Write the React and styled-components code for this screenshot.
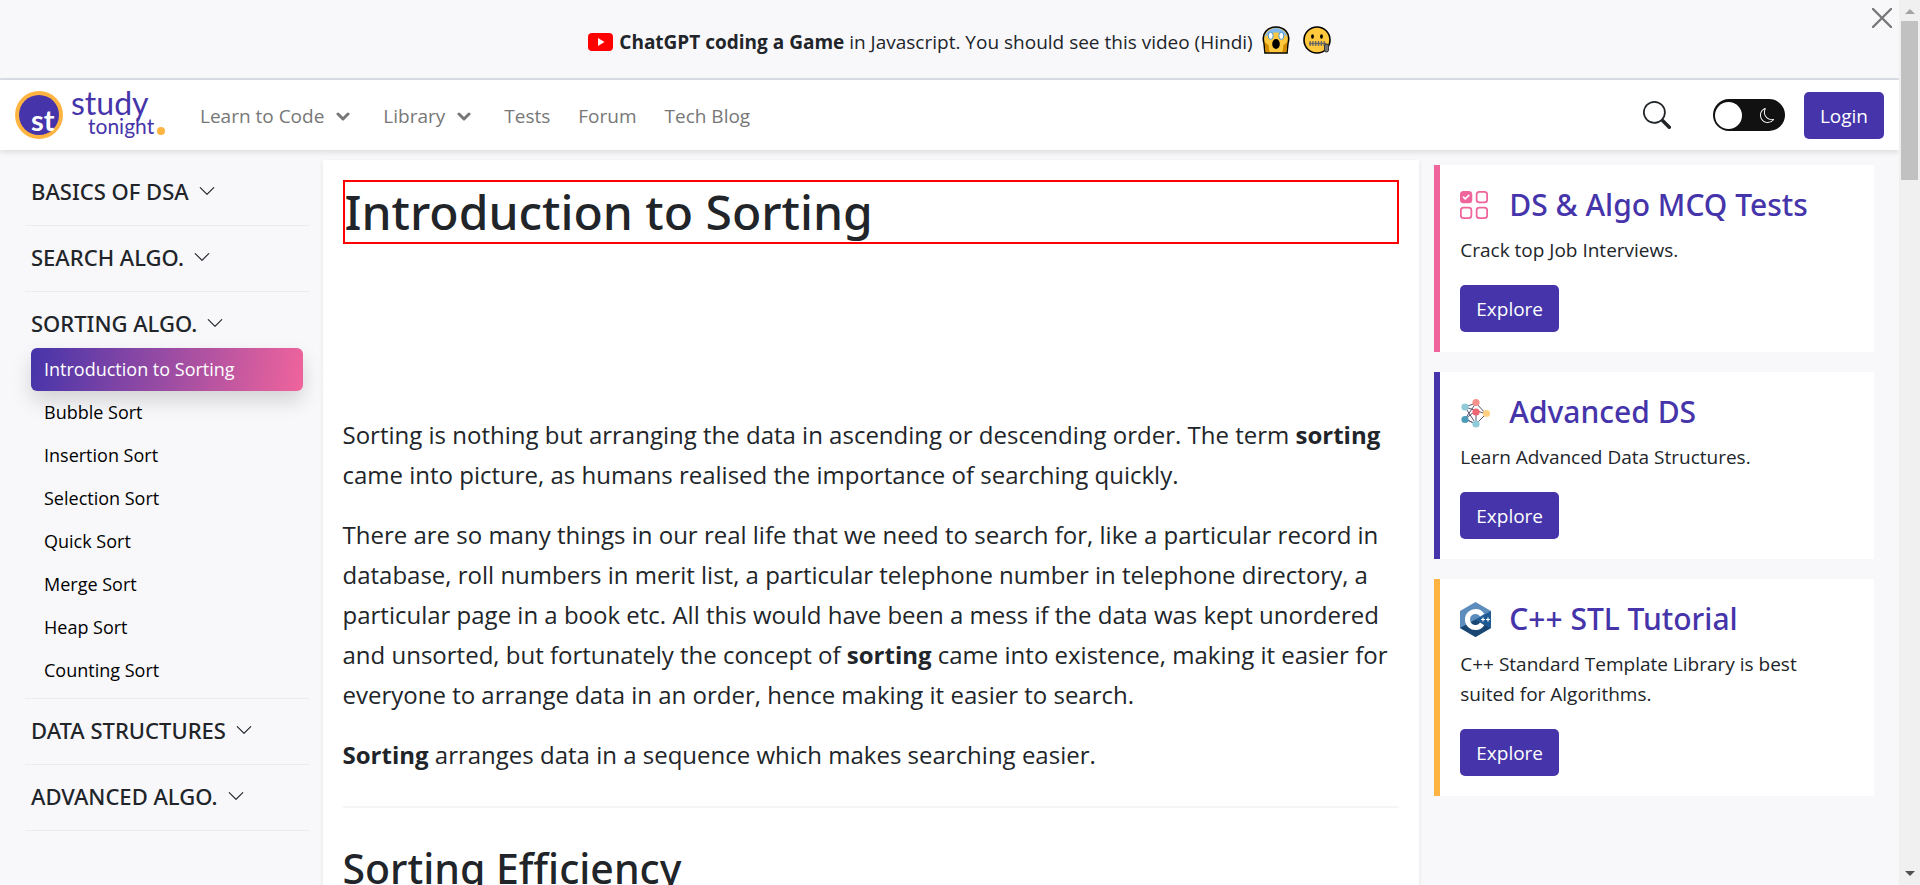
import React from "react";
import styled, { createGlobalStyle } from "styled-components";
import { BsChevronDown, BsMoon, BsSearch, BsUiChecksGrid } from "react-icons/bs";

const GlobalStyle = createGlobalStyle`
  *, *::before, *::after { box-sizing: border-box; }
  body {
    margin: 0;
    background: #f8f8fb;
    color: #212529;
    font-family: "Open Sans", "Noto Sans", sans-serif;
    font-size: 19px;
    line-height: 30px;
  }
  h1, h2, h3, p, ul { margin: 0; padding: 0; }
  h1, h2, h3 { font-family: "Noto Sans", "Open Sans", sans-serif; }
  button, input { font: inherit; color: inherit; }
  svg { display: block; flex: none; }
`;

const Frame = styled.div`
  display: flex;
  height: 100vh;
`;

const Page = styled.div`
  flex: 1;
  min-width: 0;
  overflow-y: auto;
  scrollbar-width: none;
`;

const ScrollTrack = styled.div`
  display: flex;
  flex-direction: column;
  align-items: center;
  width: 21px;
  padding: 9px 0;
  background: #f0f0f0;
`;

const ScrollArrow = styled.span`
  border: 5px solid transparent;
  border-top-width: ${(p) => (p.$up ? "0" : "5px")};
  border-bottom-width: ${(p) => (p.$up ? "5px" : "0")};
  border-top-color: ${(p) => (p.$up ? "transparent" : "#505050")};
  border-bottom-color: ${(p) => (p.$up ? "#a3a3a3" : "transparent")};
`;

const ScrollThumb = styled.span`
  width: 17px;
  height: 18vh;
  margin: 7px 0 auto;
  background: #c1c1c1;
`;

const Banner = styled.div`
  position: relative;
  display: flex;
  align-items: center;
  justify-content: center;
  height: 80px;
  padding: 6px 0 0 20px;
  border-bottom: 2px solid #dce0e6;
`;

const BannerLink = styled.a`
  display: flex;
  align-items: center;
  gap: 6px;
  color: inherit;
  text-decoration: none;
`;

const Emojis = styled.span`
  display: flex;
  gap: 13px;
  margin-left: 3px;
  padding-bottom: 4px;
`;

const CloseButton = styled.button`
  position: absolute;
  top: 8px;
  right: 7px;
  padding: 0;
  border: 0;
  background: none;
`;

const Header = styled.header`
  position: relative;
  display: flex;
  align-items: center;
  height: 70px;
  padding: 0 15px;
  background: #fff;
  box-shadow: 0 2px 6px rgba(0, 0, 0, 0.12);
`;

const Nav = styled.nav`
  display: flex;
  align-items: center;
  gap: 28px;
  flex: 1;
  margin-left: 34px;
  padding-top: 2px;
`;

const NavLink = styled.a`
  display: flex;
  align-items: center;
  gap: 12px;
  color: #777;
  text-decoration: none;

  svg { margin-right: 5px; }
`;

const Logo = styled.a`
  display: block;
`;

const IconButton = styled.button`
  padding: 0;
  border: 0;
  background: none;
`;

const Toggle = styled.label`
  position: relative;
  display: flex;
  align-items: center;
  justify-content: space-between;
  width: 72px;
  height: 32px;
  margin: 0 19px 0 42px;
  padding: 0 10px 0 2px;
  border-radius: 16px;
  background: #111;
  color: #fff;
`;

const ToggleInput = styled.input`
  position: absolute;
  inset: 0;
  width: 100%;
  height: 100%;
  margin: 0;
  opacity: 0;
`;

const Knob = styled.span`
  width: 27px;
  height: 27px;
  border-radius: 50%;
  background: #fff;
`;

const Button = styled.button`
  height: 47px;
  padding: 1px 16px 0;
  border: 0;
  border-radius: 5px;
  background: #4534aa;
  color: #fff;
`;

const Columns = styled.div`
  display: grid;
  grid-template-columns: minmax(0, 2fr) minmax(0, 7fr) minmax(0, 3fr);
`;

const Sidebar = styled.aside`
  padding: 10px 8px 0 25px;
`;

const Section = styled.section`
  padding: 16px 6px ${(p) => (p.$open ? "6px" : "19px")};
  border-bottom: 1px solid #ebecee;
`;

const SectionToggle = styled.button`
  display: flex;
  align-items: center;
  gap: 9px;
  padding: 0;
  border: 0;
  background: none;
  font-family: "Noto Sans", "Open Sans", sans-serif;
  font-size: 22px;
  font-weight: 500;
  text-align: left;
`;

const LinkList = styled.ul`
  margin-top: 10px;
  list-style: none;
`;

const TopicLink = styled.a`
  display: block;
  padding: 6px 13px;
  border-radius: 6px;
  color: ${(p) => (p.$active ? "#fff" : "#000")};
  background: ${(p) => (p.$active ? "linear-gradient(100deg, #4534aa, #f0649c)" : "none")};
  box-shadow: ${(p) => (p.$active ? "0 10px 20px rgba(0, 0, 0, 0.15)" : "none")};
  font-size: 18px;
  line-height: 31px;
  text-decoration: none;
`;

const Article = styled.main`
  margin: 10px 5px 0 6px;
  padding: 20px 20px 40px;
  background: #fff;
  box-shadow: 0 2px 5px rgba(0, 0, 0, 0.08);
`;

const Title = styled.h1`
  border: 2px solid #f00;
  font-size: 48px;
  font-weight: 500;
  line-height: 60px;
`;

const AdSlot = styled.div`
  height: 171px;
`;

const Paragraph = styled.p`
  margin-bottom: 20px;
  font-size: 24px;
  line-height: 40px;
`;

const Rule = styled.hr`
  height: 2px;
  margin: 31px 0 30px;
  border: 0;
  background: #f5f5f5;
`;

const Subtitle = styled.h2`
  font-size: 41px;
  font-weight: 500;
  line-height: 60px;
`;

const Cards = styled.aside`
  display: flex;
  flex-direction: column;
  gap: 20px;
  padding: 15px 25px 0 10px;
`;

const Card = styled.section`
  padding: 20px;
  border-left: 6px solid ${(p) => p.$accent};
  background: #fff;
`;

const CardTitle = styled.h3`
  display: flex;
  align-items: center;
  gap: 18px;
  color: #4534aa;
  font-size: 30px;
  font-weight: 500;
  line-height: 40px;
`;

const CardIcon = styled.span`
  display: block;
  width: 31px;
`;

const CardText = styled.p`
  margin: 10px 0 20px;
`;

const Chevron = () => (
  <svg width="14" height="9" viewBox="0 0 14 9" fill="none" stroke="#777" strokeWidth="3" strokeLinecap="round" strokeLinejoin="round">
    <path d="M2 2l5 5 5-5" />
  </svg>
);

const LogoMark = () => (
  <svg width="151" height="52" viewBox="0 0 151 52" role="img" aria-label="study tonight" fontFamily="Lato, sans-serif">
    <circle cx="24" cy="26" r="24" fill="#ffb442" />
    <circle cx="24" cy="26" r="20" fill="#4534aa" />
    <text x="16" y="42" fontSize="29" fontWeight="700" fill="#fff">st</text>
    <text x="56" y="26" fontSize="32" fill="#4534aa">study</text>
    <text x="73" y="45" fontSize="21" fill="#4534aa">tonight</text>
    <circle cx="146" cy="42" r="4" fill="#ffb442" />
  </svg>
);

const YouTubeIcon = () => (
  <svg width="25" height="18" viewBox="0 0 25 18">
    <rect width="25" height="18" rx="4" fill="#f00" />
    <path d="M10 5l6.500 4-6.500 4z" fill="#fff" />
  </svg>
);

const ScreamIcon = () => (
  <svg width="28" height="28" viewBox="0 0 28 28">
    <path d="M3 27L2 17C-1 7 6 1 14 1s15 6 12 16l-1 10z" fill="#ffc83d" stroke="#000" strokeWidth="1.600" />
    <path d="M2.500 11C4 5 9 2 14 2s10 3 11.500 9C19 5 9 5 2.500 11z" fill="#83b9ec" />
    <path d="M2.500 16l4 3 1 7H3.500zM25.500 16l-4 3-1 7h4z" fill="#d08a00" />
    <ellipse cx="8.700" cy="9.800" rx="2.500" ry="3.600" fill="#fff" stroke="#4c93cc" />
    <ellipse cx="19.300" cy="9.800" rx="2.500" ry="3.600" fill="#fff" stroke="#4c93cc" />
    <ellipse cx="14" cy="18" rx="3.800" ry="5" fill="#000" />
  </svg>
);

const ZipperIcon = () => (
  <svg width="28" height="28" viewBox="0 0 28 28">
    <circle cx="14" cy="14" r="13" fill="#ffc83d" stroke="#000" strokeWidth="1.600" />
    <ellipse cx="9.500" cy="10.500" rx="1.400" ry="2.200" />
    <ellipse cx="18.500" cy="10.500" rx="1.400" ry="2.200" />
    <path d="M6 17.500h17" stroke="#666" strokeWidth="1.400" />
    <path d="M6.500 17.500h16" stroke="#666" strokeWidth="5" strokeDasharray="1.300 1.500" />
    <rect x="21.500" y="18" width="4" height="8" rx="2" fill="#777" stroke="#333" />
  </svg>
);

const GraphIcon = () => (
  <svg width="31" height="31" viewBox="0 0 31 31">
    <path d="M5 10l11-4 10 11-10 10L5 22l11-8.500L5 10l11 17M5 22L16 6M16 13.500V27M16 13.500L26 17M5 22l11 5" fill="none" stroke="#5a5570" />
    <circle cx="16" cy="5.500" r="3.600" fill="#f6948b" />
    <circle cx="5" cy="10" r="3.600" fill="#8fcbd8" />
    <circle cx="5" cy="22.500" r="3.600" fill="#4b9bb9" />
    <circle cx="16" cy="15" r="3.600" fill="#ef6572" />
    <circle cx="26.500" cy="16.500" r="3.600" fill="#ffd181" />
    <circle cx="16" cy="27" r="3.600" fill="#8fcbd8" />
  </svg>
);

const CppIcon = () => (
  <svg width="31" height="35" viewBox="0 0 31 35">
    <path d="M15.500 0L31 9v17l-15.500 9L0 26V9z" fill="#5c8dbc" />
    <path d="M15.500 17.500L31 9v17z" fill="#1e5a93" />
    <path d="M15.500 17.500L31 26l-15.500 9L0 26z" fill="#1a4674" />
    <path d="M22.200 13.200a8 8 0 1 0 0 8.600" fill="none" stroke="#fff" strokeWidth="5" />
    <path d="M21 17.500h4M23 15.500v4M26 17.500h4M28 15.500v4" stroke="#fff" strokeWidth="1.200" />
  </svg>
);

const sections = [
  { title: "BASICS OF DSA" },
  { title: "SEARCH ALGO." },
  {
    title: "SORTING ALGO.",
    topics: [
      "Introduction to Sorting",
      "Bubble Sort",
      "Insertion Sort",
      "Selection Sort",
      "Quick Sort",
      "Merge Sort",
      "Heap Sort",
      "Counting Sort",
    ],
  },
  { title: "DATA STRUCTURES" },
  { title: "ADVANCED ALGO." },
];

const navItems = [
  { label: "Learn to Code", menu: true },
  { label: "Library", menu: true },
  { label: "Tests" },
  { label: "Forum" },
  { label: "Tech Blog" },
];

const cards = [
  { title: "DS & Algo MCQ Tests", text: "Crack top Job Interviews.", accent: "#f0649c", icon: <BsUiChecksGrid size={28} color="#f0649c" /> },
  { title: "Advanced DS", text: "Learn Advanced Data Structures.", accent: "#4534aa", icon: <GraphIcon /> },
  { title: "C++ STL Tutorial", text: "C++ Standard Template Library is best suited for Algorithms.", accent: "#ffb442", icon: <CppIcon /> },
];

export default function App() {
  return (
    <Frame>
      <GlobalStyle />
      <Page>
        <Banner>
          <BannerLink href="#video">
            <YouTubeIcon />
            <span>
              <strong>ChatGPT coding a Game</strong> in Javascript. You should see this video (Hindi)
            </span>
            <Emojis>
              <ScreamIcon />
              <ZipperIcon />
            </Emojis>
          </BannerLink>
          <CloseButton aria-label="Close">
            <svg width="20" height="20" viewBox="0 0 20 20" stroke="#777" strokeWidth="2.400" strokeLinecap="round">
              <path d="M1 1l18 18M19 1L1 19" />
            </svg>
          </CloseButton>
        </Banner>
        <Header>
          <Logo href="#home">
            <LogoMark />
          </Logo>
          <Nav>
            {navItems.map((item) => (
              <NavLink key={item.label} href="#nav">
                {item.label}
                {item.menu && <Chevron />}
              </NavLink>
            ))}
          </Nav>
          <IconButton aria-label="Search">
            <BsSearch size={28} />
          </IconButton>
          <Toggle>
            <ToggleInput type="checkbox" aria-label="Dark mode" />
            <Knob />
            <BsMoon size={15} />
          </Toggle>
          <Button>Login</Button>
        </Header>
        <Columns>
          <Sidebar>
            {sections.map(({ title, topics }) => (
              <Section key={title} $open={Boolean(topics)}>
                <SectionToggle aria-expanded={Boolean(topics)}>
                  {title}
                  <BsChevronDown size={18} />
                </SectionToggle>
                {topics && (
                  <LinkList>
                    {topics.map((topic, i) => (
                      <li key={topic}>
                        <TopicLink href="#topic" $active={i === 0}>
                          {topic}
                        </TopicLink>
                      </li>
                    ))}
                  </LinkList>
                )}
              </Section>
            ))}
          </Sidebar>
          <Article>
            <Title>Introduction to Sorting</Title>
            <AdSlot />
            <Paragraph>
              Sorting is nothing but arranging the data in ascending or descending order. The term <strong>sorting</strong> came into picture, as humans realised the importance of searching quickly.
            </Paragraph>
            <Paragraph>
              There are so many things in our real life that we need to search for, like a particular record in database, roll numbers in merit list, a particular telephone number in telephone directory, a particular page in a book etc. All this would have been a mess if the data was kept unordered and unsorted, but fortunately the concept of <strong>sorting</strong> came into existence, making it easier for everyone to arrange data in an order, hence making it easier to search.
            </Paragraph>
            <Paragraph>
              <strong>Sorting</strong> arranges data in a sequence which makes searching easier.
            </Paragraph>
            <Rule />
            <Subtitle>Sorting Efficiency</Subtitle>
          </Article>
          <Cards>
            {cards.map((card) => (
              <Card key={card.title} $accent={card.accent}>
                <CardTitle>
                  <CardIcon>{card.icon}</CardIcon>
                  {card.title}
                </CardTitle>
                <CardText>{card.text}</CardText>
                <Button>Explore</Button>
              </Card>
            ))}
          </Cards>
        </Columns>
      </Page>
      <ScrollTrack aria-hidden="true">
        <ScrollArrow $up />
        <ScrollThumb />
        <ScrollArrow />
      </ScrollTrack>
    </Frame>
  );
}
